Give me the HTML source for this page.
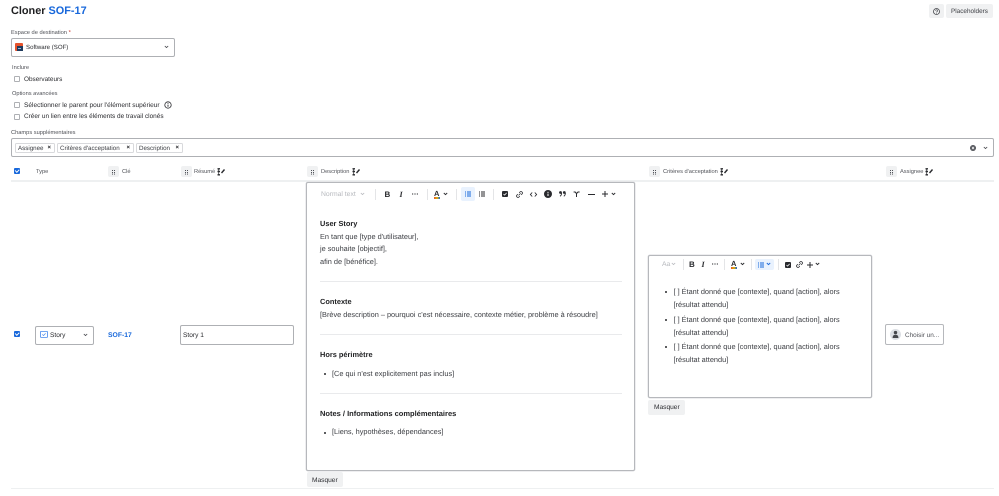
<!DOCTYPE html>
<html lang="fr"><head><meta charset="utf-8"><title>Cloner SOF-17</title>
<style>
html,body{margin:0;padding:0;background:#fff}
body{position:relative;width:999px;height:496px;overflow:hidden;font-family:"Liberation Sans",sans-serif;color:#292a2e;text-rendering:geometricPrecision;filter:blur(.25px)}
.t{position:absolute;white-space:nowrap;line-height:10px;font-size:6.6px}
.l{color:#505258;font-size:5.7px}
.b{font-weight:700;color:#1e1f21}
.d{color:#3b3d42;font-size:7.35px}
.box{position:absolute;box-sizing:border-box;border:1px solid #aeb0b4;border-radius:2px;background:#fff}
.ed{border:1px solid #b6b8bc;box-shadow:0 0 0 .5px #dcdde0}
.btn{position:absolute;background:#f0f1f2;border-radius:2px}
.cb{position:absolute;box-sizing:border-box;width:6px;height:6px;border:1px solid #aeb0b4;border-radius:1px;background:#fff}
.ck{position:absolute;width:6px;height:6px;background:#1868db;border-radius:1px}
.ck:after{content:"";position:absolute;left:1.2px;top:1px;width:3px;height:1.5px;border-left:1px solid #fff;border-bottom:1px solid #fff;transform:rotate(-45deg)}
.hr{position:absolute;height:1px;background:#e9eaec}
.sep{position:absolute;width:1px;background:#e4e5e7;height:11px}
.g{position:absolute;width:11px;height:11px;background:#f0f1f2;border-radius:2px}
.g:after{content:"";position:absolute;left:4px;top:3.5px;width:1px;height:1px;background:#505258;box-shadow:2px 0 #505258,0 2px #505258,2px 2px #505258,0 3.6px #505258,2px 3.6px #505258}
.tag{position:absolute;box-sizing:border-box;height:10px;top:143px;border:1px solid #d8d9dc;border-radius:1.5px;background:#fff;font-size:6.2px;line-height:9.5px;padding-left:2px;white-space:nowrap;color:#3b3d42}
.tag i{position:absolute;right:3px;top:0;font-style:normal;font-size:6px;font-weight:700;line-height:8px;color:#292a2e}
svg{position:absolute;overflow:visible}
.dot{position:absolute;width:2.4px;height:2.4px;border-radius:50%;background:#292a2e}
.line{position:absolute;height:1px;background:#eef0f1}
</style></head><body>

<div class="t" style="left:11px;top:6px;font-size:10.9px;font-weight:700;line-height:11px;color:#1e1f21">Cloner <span style="color:#1868db">SOF-17</span></div>

<div class="btn" style="left:929px;top:4px;width:15px;height:14px"></div>
<svg style="left:933px;top:7.5px" width="7" height="7" viewBox="0 0 7 7"><circle cx="3.5" cy="3.5" r="3" fill="none" stroke="#44464b" stroke-width=".8"/><path d="M2.5 2.7a1 1 0 1 1 1.4 1L3.5 4.3" fill="none" stroke="#44464b" stroke-width=".7"/><circle cx="3.5" cy="5.3" r=".4" fill="#44464b"/></svg>
<div class="btn" style="left:946px;top:4px;width:47px;height:14px"></div>
<div class="t" style="left:951px;top:6.5px;font-size:6.4px;color:#3b3d42">Placeholders</div>

<div class="t l" style="left:11px;top:27.5px">Espace de destination <span style="color:#c9372c">*</span></div>
<div class="box" style="left:11px;top:38px;width:164px;height:19px"></div>
<svg style="left:15px;top:43px" width="8" height="8" viewBox="0 0 8 8"><rect width="8" height="8" rx="1" fill="#e5532d"/><rect x="2" y="3" width="6" height="5" fill="#1f3a5c"/><rect x="3" y="5" width="3" height="1" fill="#8fb8e0"/></svg>
<div class="t" style="left:26px;top:42.5px;font-size:6.1px">Software (SOF)</div>
<svg style="left:164px;top:45px" width="5" height="4" viewBox="0 0 5 4"><path d="M.8 1l1.7 1.6L4.2 1" fill="none" stroke="#44464b" stroke-width=".8"/></svg>

<div class="t l" style="left:12px;top:63px">Inclure</div>
<div class="cb" style="left:14px;top:76px"></div>
<div class="t" style="left:24px;top:74.5px;font-size:6.4px">Observateurs</div>

<div class="t l" style="left:12px;top:89px">Options avancées</div>
<div class="cb" style="left:14px;top:102px"></div>
<div class="t" style="left:24px;top:100.5px;font-size:6.55px">Sélectionner le parent pour l'élément supérieur</div>
<svg style="left:164px;top:101px" width="8" height="8" viewBox="0 0 8 8"><circle cx="4" cy="4" r="3.2" fill="none" stroke="#292a2e" stroke-width=".8"/><path d="M4 3.6v2.2" stroke="#292a2e" stroke-width=".9"/><circle cx="4" cy="2.4" r=".5" fill="#292a2e"/></svg>
<div class="cb" style="left:14px;top:114px"></div>
<div class="t" style="left:24px;top:112px;font-size:6.45px">Créer un lien entre les éléments de travail clonés</div>

<div class="t l" style="left:11px;top:128px">Champs supplémentaires</div>
<div class="box" style="left:11px;top:138px;width:983px;height:19px"></div>
<div class="tag" style="left:15px;width:40px">Assignee<i>×</i></div>
<div class="tag" style="left:57px;width:77px">Critères d'acceptation<i>×</i></div>
<div class="tag" style="left:136px;width:47px">Description<i>×</i></div>
<svg style="left:970px;top:145px" width="6" height="6" viewBox="0 0 6 6"><circle cx="3" cy="3" r="3" fill="#505258"/><path d="M1.8 1.8l2.4 2.4M4.2 1.8L1.8 4.2" stroke="#fff" stroke-width=".7"/></svg>
<svg style="left:983px;top:146px" width="5" height="4" viewBox="0 0 5 4"><path d="M.8 1l1.7 1.6L4.2 1" fill="none" stroke="#44464b" stroke-width=".8"/></svg>

<!-- header row -->
<div class="ck" style="left:14px;top:168px"></div>
<div class="t l" style="left:36px;top:166.5px">Type</div>
<div class="g" style="left:108px;top:166px"></div>
<div class="t l" style="left:122px;top:166.5px">Clé</div>
<div class="g" style="left:181px;top:166px"></div>
<div class="t l" style="left:194px;top:166.5px">Résumé</div>
<div class="g" style="left:307px;top:166px"></div>
<div class="t l" style="left:321px;top:166.5px">Description</div>
<div class="g" style="left:649px;top:166px"></div>
<div class="t l" style="left:663px;top:166.5px">Critères d'acceptation</div>
<div class="g" style="left:886px;top:166px"></div>
<div class="t l" style="left:900px;top:166.5px">Assignee</div>
<svg style="left:217px;top:167.5px" width="8" height="8" viewBox="0 0 8 8"><path d="M.5 .8h2.5M.5 3.5h2.5M.5 6.8h2.5" stroke="#292a2e" stroke-width="1.4"/><path d="M1.7 .8v6" stroke="#292a2e" stroke-width=".7"/><path d="M4.5 5L7.5 1.5" stroke="#292a2e" stroke-width="1.4"/></svg>
<svg style="left:352px;top:167.5px" width="8" height="8" viewBox="0 0 8 8"><path d="M.5 .8h2.5M.5 3.5h2.5M.5 6.8h2.5" stroke="#292a2e" stroke-width="1.4"/><path d="M1.7 .8v6" stroke="#292a2e" stroke-width=".7"/><path d="M4.5 5L7.5 1.5" stroke="#292a2e" stroke-width="1.4"/></svg>
<svg style="left:720px;top:167.5px" width="8" height="8" viewBox="0 0 8 8"><path d="M.5 .8h2.5M.5 3.5h2.5M.5 6.8h2.5" stroke="#292a2e" stroke-width="1.4"/><path d="M1.7 .8v6" stroke="#292a2e" stroke-width=".7"/><path d="M4.5 5L7.5 1.5" stroke="#292a2e" stroke-width="1.4"/></svg>
<svg style="left:925px;top:167.5px" width="8" height="8" viewBox="0 0 8 8"><path d="M.5 .8h2.5M.5 3.5h2.5M.5 6.8h2.5" stroke="#292a2e" stroke-width="1.4"/><path d="M1.7 .8v6" stroke="#292a2e" stroke-width=".7"/><path d="M4.5 5L7.5 1.5" stroke="#292a2e" stroke-width="1.4"/></svg>
<div class="line" style="left:11px;top:180px;width:983px;height:2px"></div>

<!-- row left -->
<div class="ck" style="left:14px;top:331px"></div>
<div class="box" style="left:35px;top:326px;width:59px;height:19px"></div>
<svg style="left:39.5px;top:331px" width="8" height="7" viewBox="0 0 8 7"><rect x=".4" y=".4" width="7.2" height="6" rx=".8" fill="none" stroke="#4688ec" stroke-width=".8"/><path d="M2.3 3.4l1.2 1.1 2.1-2.1" fill="none" stroke="#4688ec" stroke-width=".7"/></svg>
<div class="t" style="left:50px;top:330.5px;font-size:6.6px">Story</div>
<svg style="left:83px;top:333px" width="5" height="4" viewBox="0 0 5 4"><path d="M.8 1l1.7 1.6L4.2 1" fill="none" stroke="#44464b" stroke-width=".8"/></svg>
<div class="t" style="left:108px;top:330.5px;font-size:6.8px;font-weight:700;color:#1868db">SOF-17</div>
<div class="box" style="left:180px;top:325px;width:114px;height:20px"></div>
<div class="t" style="left:183px;top:330.5px;font-size:6.6px">Story 1</div>

<!-- description editor -->
<div class="box ed" style="left:306px;top:182px;width:329px;height:289px"></div>
<div class="t" style="left:321px;top:190px;font-size:6.8px;color:#b7b9be">Normal text</div>
<svg style="left:360px;top:192px" width="5" height="4" viewBox="0 0 5 4"><path d="M.8 1l1.7 1.6L4.2 1" fill="none" stroke="#b7b9be" stroke-width=".8"/></svg>
<div class="sep" style="left:375px;top:189px"></div>
<div class="t" style="left:384.5px;top:190px;font-size:8px;font-weight:700">B</div>
<div class="t" style="left:399.5px;top:190px;font-size:8px;font-weight:700;font-style:italic;font-family:'Liberation Serif',serif">I</div>
<svg style="left:412px;top:193px" width="6" height="2" viewBox="0 0 6 2"><path d="M0 1h1.2M2.4 1h1.2M4.8 1H6" stroke="#292a2e" stroke-width="1.1"/></svg>
<div class="sep" style="left:427px;top:189px"></div>
<div class="t" style="left:434px;top:189px;font-size:7.5px;font-weight:700">A</div>
<div style="position:absolute;left:434px;top:197px;width:6px;height:1.5px;background:linear-gradient(90deg,#e5532d,#e2b203,#1868db)"></div>
<svg style="left:443px;top:192px" width="5" height="4" viewBox="0 0 5 4"><path d="M.8 1l1.7 1.6L4.2 1" fill="none" stroke="#292a2e" stroke-width=".9"/></svg>
<div class="sep" style="left:456px;top:189px"></div>
<div style="position:absolute;left:461px;top:187px;width:14px;height:14px;background:#e9f2fe;border-radius:2px"></div>
<svg style="left:465px;top:191px" width="6" height="6" viewBox="0 0 6 6"><path d="M0 1h1M2 1h4M0 3h1M2 3h4M0 5h1M2 5h4" stroke="#1868db" stroke-width="1"/></svg>
<svg style="left:479px;top:191px" width="6" height="6" viewBox="0 0 6 6"><path d="M0 1h1M2 1h4M0 3h1M2 3h4M0 5h1M2 5h4" stroke="#292a2e" stroke-width="1"/></svg>
<div class="sep" style="left:493px;top:189px"></div>
<svg style="left:502px;top:191px" width="6" height="6" viewBox="0 0 6 6"><rect width="6" height="6" rx="1" fill="#292a2e"/><path d="M1.5 3l1.1 1.1 2-2.2" fill="none" stroke="#fff" stroke-width=".8"/></svg>
<svg style="left:516px;top:191px" width="7" height="7" viewBox="0 0 7 7"><path d="M2.6 4.4l2-2M3.2 1.8l.8-.8a1.4 1.4 0 0 1 2 2l-.8.8M3.8 5.2l-.8.8a1.4 1.4 0 0 1-2-2l.8-.8" fill="none" stroke="#292a2e" stroke-width=".8"/></svg>
<svg style="left:530px;top:191.5px" width="7" height="5" viewBox="0 0 7 5"><path d="M2.2 .5L.4 2.5l1.8 2M4.8 .5l1.8 2-1.8 2" fill="none" stroke="#292a2e" stroke-width=".9"/></svg>
<svg style="left:544px;top:190px" width="8" height="8" viewBox="0 0 8 8"><circle cx="4" cy="4" r="4" fill="#292a2e"/><path d="M4 3.6v2.4" stroke="#fff" stroke-width="1"/><circle cx="4" cy="2.3" r=".6" fill="#fff"/></svg>
<svg style="left:558.5px;top:191px" width="7" height="6" viewBox="0 0 7 6"><circle cx="1.5" cy="1.5" r="1.4" fill="#292a2e"/><circle cx="5.3" cy="1.5" r="1.4" fill="#292a2e"/><path d="M2.6 2c0 1.6-.6 2.6-1.6 3.2M6.4 2c0 1.6-.6 2.6-1.6 3.2" fill="none" stroke="#292a2e" stroke-width=".9"/></svg>
<svg style="left:573px;top:191px" width="7" height="6" viewBox="0 0 7 6"><path d="M.6 1h1.6l1.3 1.6L5 1h1.6M3.5 2.6V6" fill="none" stroke="#292a2e" stroke-width="1"/></svg>
<div style="position:absolute;left:588px;top:193.5px;width:7px;height:1px;background:#292a2e"></div>
<svg style="left:602px;top:191px" width="6" height="6" viewBox="0 0 6 6"><path d="M3 0v6M0 3h6" stroke="#292a2e" stroke-width="1"/></svg>
<svg style="left:611px;top:192px" width="5" height="4" viewBox="0 0 5 4"><path d="M.8 1l1.7 1.6L4.2 1" fill="none" stroke="#292a2e" stroke-width=".9"/></svg>

<div class="t b" style="left:320px;top:218.5px;font-size:7.4px">User Story</div>
<div class="t d" style="left:320px;top:231.5px">En tant que [type d'utilisateur],</div>
<div class="t d" style="left:320px;top:244px">je souhaite [objectif],</div>
<div class="t d" style="left:320px;top:257px">afin de [bénéfice].</div>
<div class="hr" style="left:320px;top:281px;width:302px"></div>
<div class="t b" style="left:320px;top:297px;font-size:7.4px">Contexte</div>
<div class="t d" style="left:320px;top:310px">[Brève description – pourquoi c'est nécessaire, contexte métier, problème à résoudre]</div>
<div class="hr" style="left:320px;top:334px;width:302px"></div>
<div class="t b" style="left:320px;top:350px;font-size:7.4px">Hors périmètre</div>
<div class="dot" style="left:324px;top:373px"></div>
<div class="t d" style="left:332px;top:369px">[Ce qui n'est explicitement pas inclus]</div>
<div class="hr" style="left:320px;top:393px;width:302px"></div>
<div class="t b" style="left:320px;top:409px;font-size:7.5px">Notes / Informations complémentaires</div>
<div class="dot" style="left:324px;top:431.5px"></div>
<div class="t d" style="left:332px;top:427px">[Liens, hypothèses, dépendances]</div>
<div class="btn" style="left:307px;top:472px;width:36px;height:15px"></div>
<div class="t" style="left:312px;top:475.5px;font-size:6.6px">Masquer</div>

<!-- criteria editor -->
<div class="box ed" style="left:648px;top:255px;width:224px;height:143px"></div>
<div class="t" style="left:662px;top:260px;font-size:6.8px;color:#b7b9be">Aa</div>
<svg style="left:671px;top:262px" width="5" height="4" viewBox="0 0 5 4"><path d="M.8 1l1.7 1.6L4.2 1" fill="none" stroke="#b7b9be" stroke-width=".8"/></svg>
<div class="sep" style="left:683px;top:259px"></div>
<div class="t" style="left:689px;top:260px;font-size:8px;font-weight:700">B</div>
<div class="t" style="left:701.5px;top:260px;font-size:8px;font-weight:700;font-style:italic;font-family:'Liberation Serif',serif">I</div>
<svg style="left:712px;top:263px" width="6" height="2" viewBox="0 0 6 2"><path d="M0 1h1.2M2.4 1h1.2M4.8 1H6" stroke="#292a2e" stroke-width="1.1"/></svg>
<div class="sep" style="left:724px;top:259px"></div>
<div class="t" style="left:731px;top:259px;font-size:7.5px;font-weight:700">A</div>
<div style="position:absolute;left:731px;top:267px;width:6px;height:1.5px;background:linear-gradient(90deg,#e5532d,#e2b203,#1868db)"></div>
<svg style="left:740px;top:262px" width="5" height="4" viewBox="0 0 5 4"><path d="M.8 1l1.7 1.6L4.2 1" fill="none" stroke="#292a2e" stroke-width=".9"/></svg>
<div class="sep" style="left:751px;top:259px"></div>
<div style="position:absolute;left:755px;top:259px;width:19px;height:11px;background:#e9f2fe;border-radius:2px"></div>
<svg style="left:758px;top:261.5px" width="6" height="6" viewBox="0 0 6 6"><path d="M0 1h1M2 1h4M0 3h1M2 3h4M0 5h1M2 5h4" stroke="#1868db" stroke-width="1"/></svg>
<svg style="left:766px;top:262px" width="5" height="4" viewBox="0 0 5 4"><path d="M.8 1l1.7 1.6L4.2 1" fill="none" stroke="#1868db" stroke-width=".9"/></svg>
<div class="sep" style="left:778px;top:259px"></div>
<svg style="left:785px;top:261.5px" width="6" height="6" viewBox="0 0 6 6"><rect width="6" height="6" rx="1" fill="#292a2e"/><path d="M1.5 3l1.1 1.1 2-2.2" fill="none" stroke="#fff" stroke-width=".8"/></svg>
<svg style="left:796px;top:261px" width="7" height="7" viewBox="0 0 7 7"><path d="M2.6 4.4l2-2M3.2 1.8l.8-.8a1.4 1.4 0 0 1 2 2l-.8.8M3.8 5.2l-.8.8a1.4 1.4 0 0 1-2-2l.8-.8" fill="none" stroke="#292a2e" stroke-width=".8"/></svg>
<svg style="left:807px;top:261.5px" width="6" height="6" viewBox="0 0 6 6"><path d="M3 0v6M0 3h6" stroke="#292a2e" stroke-width="1"/></svg>
<svg style="left:815px;top:262px" width="5" height="4" viewBox="0 0 5 4"><path d="M.8 1l1.7 1.6L4.2 1" fill="none" stroke="#292a2e" stroke-width=".9"/></svg>

<div class="dot" style="left:665px;top:291px"></div>
<div class="t d" style="left:673.5px;top:287px">[ ] Étant donné que [contexte], quand [action], alors</div>
<div class="t d" style="left:673.5px;top:300px">[résultat attendu]</div>
<div class="dot" style="left:665px;top:318.5px"></div>
<div class="t d" style="left:673.5px;top:314.5px">[ ] Étant donné que [contexte], quand [action], alors</div>
<div class="t d" style="left:673.5px;top:327.5px">[résultat attendu]</div>
<div class="dot" style="left:665px;top:346px"></div>
<div class="t d" style="left:673.5px;top:342px">[ ] Étant donné que [contexte], quand [action], alors</div>
<div class="t d" style="left:673.5px;top:355px">[résultat attendu]</div>
<div class="btn" style="left:648px;top:400px;width:37px;height:15px"></div>
<div class="t" style="left:654px;top:403px;font-size:6.6px">Masquer</div>

<!-- assignee -->
<div class="box" style="left:885px;top:324px;width:59px;height:21px;border-color:#b6b8bc"></div>
<svg style="left:890px;top:329px" width="11" height="11" viewBox="0 0 11 11"><circle cx="5.5" cy="5.5" r="5.5" fill="#dcdfe4"/><circle cx="5.5" cy="3.6" r="1.7" fill="#44464b"/><path d="M2.6 9c0-2.2 1-3.2 2.9-3.2S8.4 6.8 8.4 9z" fill="#44464b"/></svg>
<div class="t" style="left:905px;top:330.5px;font-size:6.4px;color:#505258">Choisir un...</div>

<div class="line" style="left:11px;top:488px;width:983px"></div>
</body></html>
